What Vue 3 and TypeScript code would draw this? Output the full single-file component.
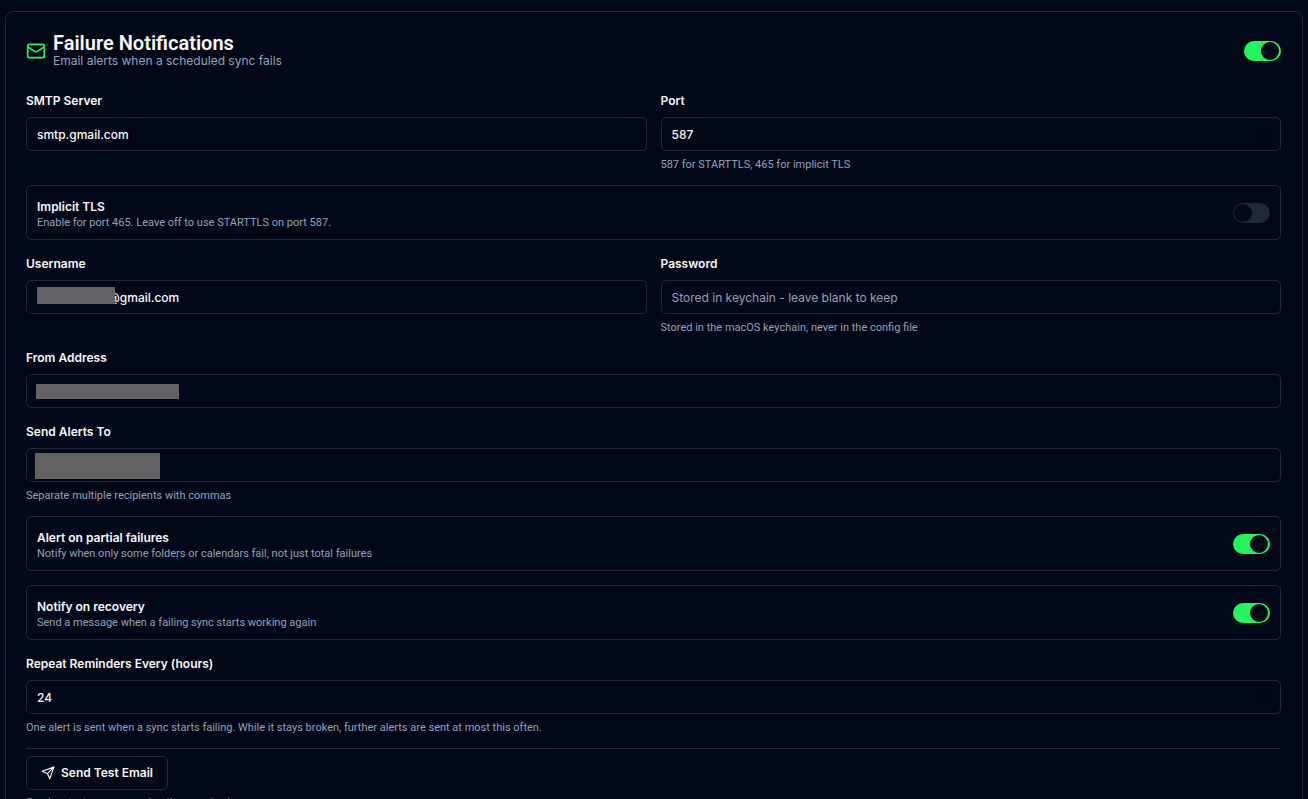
<script setup lang="ts">
import { reactive } from 'vue'

const form = reactive({
  enabled: true,
  server: 'smtp.gmail.com',
  port: 587,
  implicitTls: false,
  username: '@gmail.com',
  password: '',
  from: '',
  recipients: '',
  partial: true,
  recovery: true,
  repeatHours: 24,
})
</script>

<template>
  <main class="page">
    <section class="card">
      <header class="card-header">
        <svg class="mail-icon" viewBox="0 0 24 24" aria-hidden="true">
          <rect x="2" y="4" width="20" height="16" rx="2" />
          <path d="m22 7-8.97 5.7a1.94 1.94 0 0 1-2.06 0L2 7" />
        </svg>
        <div class="heading">
          <h1>Failure Notifications</h1>
          <p>Email alerts when a scheduled sync fails</p>
        </div>
        <input v-model="form.enabled" class="switch" type="checkbox" role="switch" aria-label="Failure Notifications" />
      </header>

      <form class="fields" @submit.prevent>
        <div class="pair">
          <div class="field">
            <label for="server">SMTP Server</label>
            <input id="server" v-model="form.server" class="control" type="text" />
          </div>
          <div class="field">
            <label for="port">Port</label>
            <div class="control-wrap">
              <input id="port" v-model="form.port" class="control" type="number" />
              <svg class="stepper" viewBox="0 0 8 12" aria-hidden="true"><path d="M1 4l3-3 3 3M1 8l3 3 3-3" /></svg>
            </div>
            <p class="hint">587 for STARTTLS, 465 for implicit TLS</p>
          </div>
        </div>

        <div class="option">
          <div class="option-text">
            <label for="tls">Implicit TLS</label>
            <p>Enable for port 465. Leave off to use STARTTLS on port 587.</p>
          </div>
          <input id="tls" v-model="form.implicitTls" class="switch" type="checkbox" role="switch" />
        </div>

        <div class="pair">
          <div class="field">
            <label for="username">Username</label>
            <div class="control-wrap">
              <input id="username" v-model="form.username" class="control masked-input" type="text" />
              <span class="mask mask-user"></span>
            </div>
          </div>
          <div class="field">
            <label for="password">Password</label>
            <input id="password" v-model="form.password" class="control" type="password" placeholder="Stored in keychain - leave blank to keep" />
            <p class="hint">Stored in the macOS keychain, never in the config file</p>
          </div>
        </div>

        <div class="field">
          <label for="from">From Address</label>
          <div class="control-wrap">
            <input id="from" v-model="form.from" class="control" type="text" />
            <span class="mask mask-from"></span>
          </div>
        </div>

        <div class="field">
          <label for="recipients">Send Alerts To</label>
          <div class="control-wrap">
            <input id="recipients" v-model="form.recipients" class="control" type="text" />
            <span class="mask mask-to"></span>
          </div>
          <p class="hint">Separate multiple recipients with commas</p>
        </div>

        <div class="option">
          <div class="option-text">
            <label for="partial">Alert on partial failures</label>
            <p>Notify when only some folders or calendars fail, not just total failures</p>
          </div>
          <input id="partial" v-model="form.partial" class="switch" type="checkbox" role="switch" />
        </div>

        <div class="option">
          <div class="option-text">
            <label for="recovery">Notify on recovery</label>
            <p>Send a message when a failing sync starts working again</p>
          </div>
          <input id="recovery" v-model="form.recovery" class="switch" type="checkbox" role="switch" />
        </div>

        <div class="field">
          <label for="repeat">Repeat Reminders Every (hours)</label>
          <div class="control-wrap">
            <input id="repeat" v-model="form.repeatHours" class="control" type="number" />
            <svg class="stepper" viewBox="0 0 8 12" aria-hidden="true"><path d="M1 4l3-3 3 3M1 8l3 3 3-3" /></svg>
          </div>
          <p class="hint">One alert is sent when a sync starts failing. While it stays broken, further alerts are sent at most this often.</p>
        </div>

        <footer class="actions">
          <button class="test-button" type="button">
            <svg viewBox="0 0 24 24" aria-hidden="true">
              <path d="m22 2-7 20-4-9-9-4Z" />
              <path d="M22 2 11 13" />
            </svg>
            Send Test Email
          </button>
          <p class="hint">Sends a test message using the saved values</p>
        </footer>
      </form>
    </section>
  </main>
</template>

<style>
body {
  margin: 0;
  background: #020817;
}
html {
  scrollbar-width: none;
  background: #020817;
}
</style>

<style scoped>
* {
  box-sizing: border-box;
}
.page {
  padding: 11px 5px 24px;
  background: #020817;
  color: #f8fafc;
  font-family: Inter, "Liberation Sans", sans-serif;
  font-size: 12px;
  line-height: 16px;
}
h1,
p {
  margin: 0;
}
.card {
  padding: 21px 21px 24px 20px;
  border: 1px solid #1e293b;
  border-radius: 8px;
}
.card-header {
  display: flex;
  align-items: center;
  gap: 7px;
  margin-bottom: 22px;
}
.mail-icon {
  width: 20px;
  height: 20px;
  fill: none;
  stroke: #22f55e;
  stroke-width: 2;
  stroke-linecap: round;
  stroke-linejoin: round;
}
.heading {
  flex: 1;
}
h1 {
  font-family: Roboto, "Liberation Sans", sans-serif;
  font-size: 20px;
  line-height: 20px;
  font-weight: 600;
}
.heading p {
  color: #94a3b8;
}
.fields {
  display: flex;
  flex-direction: column;
  gap: 14px;
}
.pair {
  display: grid;
  grid-template-columns: 1fr 1fr;
  gap: 14px;
}
.field {
  display: flex;
  flex-direction: column;
}
label {
  font-weight: 600;
}
.field label {
  margin: 2px 0 8px;
}
.control-wrap {
  position: relative;
}
.control {
  display: block;
  width: 100%;
  height: 34px;
  padding: 0 10px;
  border: 1px solid #1e293b;
  border-radius: 5px;
  outline: none;
  background: transparent;
  color: #f8fafc;
  font: 500 12px/16px Inter, "Liberation Sans", sans-serif;
  appearance: textfield;
}
.control::-webkit-inner-spin-button {
  display: none;
}
.control::placeholder {
  color: #94a3b8;
  font-weight: 400;
  opacity: 1;
}
.masked-input {
  padding-left: 81px;
}
.mask {
  position: absolute;
  background: #626262;
}
.mask-user {
  left: 11px;
  top: 7px;
  width: 78px;
  height: 17px;
}
.mask-from {
  left: 10px;
  top: 10px;
  width: 143px;
  height: 15px;
}
.mask-to {
  left: 9px;
  top: 5px;
  width: 125px;
  height: 26px;
}
.stepper {
  position: absolute;
  right: 13px;
  top: 11px;
  width: 8px;
  height: 12px;
  fill: none;
  stroke: #000000;
  stroke-width: 1;
}
.hint,
.option-text p {
  color: #94a3b8;
  font-family: Roboto, "Liberation Sans", sans-serif;
  font-size: 11px;
  line-height: 12px;
}
.hint {
  margin-top: 8px;
}
.option {
  display: flex;
  align-items: center;
  justify-content: space-between;
  padding: 11px 10px 10px;
  border: 1px solid #1e293b;
  border-radius: 5px;
}
.option-text {
  display: flex;
  flex-direction: column;
  gap: 2px;
  padding-top: 2px;
}
.switch {
  appearance: none;
  flex: none;
  display: flex;
  align-items: center;
  width: 37px;
  height: 20px;
  margin: 0;
  padding: 0 1px;
  border-radius: 10px;
  background: #1e293b;
}
.switch::before {
  content: "";
  width: 18px;
  height: 18px;
  border-radius: 50%;
  background: #020817;
}
.switch:checked {
  justify-content: flex-end;
  padding-right: 2px;
  background: #22f55e;
}
.actions {
  display: flex;
  flex-direction: column;
  align-items: flex-start;
  padding-top: 7px;
  border-top: 1px solid #1e293b;
}
.actions .hint {
  margin-top: 7px;
}
.test-button {
  display: flex;
  align-items: center;
  gap: 6px;
  height: 34px;
  padding: 0 14px;
  border: 1px solid #1e293b;
  border-radius: 5px;
  background: transparent;
  color: #f8fafc;
  font: 600 12px/16px Inter, "Liberation Sans", sans-serif;
}
.test-button svg {
  width: 14px;
  height: 14px;
  fill: none;
  stroke: currentColor;
  stroke-width: 2;
  stroke-linecap: round;
  stroke-linejoin: round;
}
</style>
